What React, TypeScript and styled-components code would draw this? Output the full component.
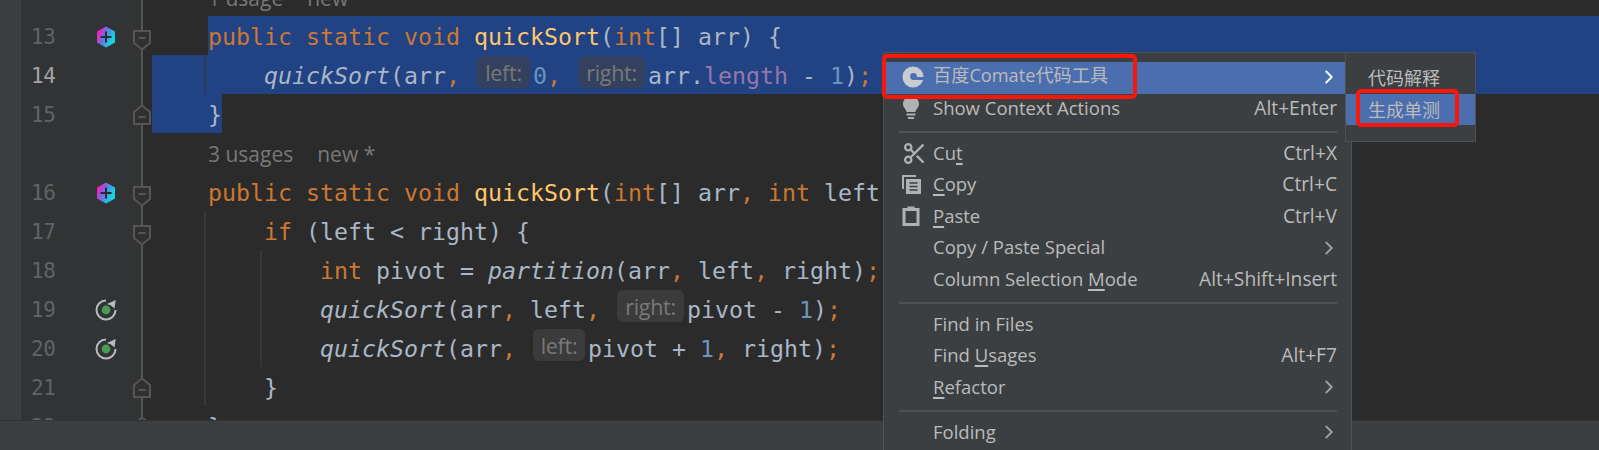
import React, { FC } from 'react';
import styled, { createGlobalStyle } from 'styled-components';
import { ChevronRight, Scissors } from 'lucide-react';

const GlobalStyle = createGlobalStyle`
	html, body {
		margin: 0;
		padding: 0;
		background: #2b2b2b;
	}
`;

const MONO = `'DejaVu Sans Mono', 'Liberation Mono', monospace`;
const SANS = `'Open Sans', 'Noto Sans CJK SC', sans-serif`;
const ROW = 39;

const tokenColors: Record<string, string> = {
	key: '#cc7832',
	decl: '#ffc66d',
	plain: '#a9b7c6',
	num: '#6897bb',
	field: '#9876aa',
	call: '#a9b7c6',
};

const Screen = styled.div`
	position: relative;
	width: 1599px;
	height: 450px;
	overflow: hidden;
	display: flex;
	flex-direction: column;
	background: #2b2b2b;
`;

const Workspace = styled.div`
	flex: 1;
	min-height: 0;
	display: flex;
	overflow: hidden;
`;

const LeftStrip = styled.div`
	width: 21px;
	flex: none;
	background: #3c3f41;
`;

const Gutter = styled.div`
	width: 122px;
	flex: none;
	margin-top: -23px;
	background: #313335;
	box-shadow: inset -2px 0 0 0 #555555;
	height: 470px;
`;

const GutterRow = styled.div`
	position: relative;
	height: ${ROW}px;
	display: grid;
	grid-template-columns: 63px 24px;
	align-items: center;
	padding-left: 10px;
`;

const LineNo = styled.span<{ $current?: boolean }>`
	padding-top: 2px;
	font: 21px/${ROW}px ${MONO};
	letter-spacing: -0.3px;
	color: ${(p) => (p.$current ? '#a4a3a3' : '#606366')};
`;

const MarkerSlot = styled.span`
	display: flex;
	align-items: center;
	justify-content: center;
`;

const FoldMark = styled.svg<{ $up?: boolean }>`
	position: absolute;
	right: -8px;
	top: ${(p) => (p.$up ? 10 : 13)}px;
	z-index: 1;
`;

const Code = styled.div`
	flex: 1;
	min-width: 0;
	margin-top: -23px;
	height: 470px;
`;

const CodeLine = styled.div<{ $selFrom?: number; $selTo?: number }>`
	position: relative;
	height: ${ROW}px;
	padding-left: 65px;
	white-space: pre;
	font: 23.25px/41px ${MONO};
	color: #a9b7c6;
	background: ${(p) =>
		p.$selFrom !== undefined
			? `linear-gradient(to right, transparent ${p.$selFrom}px, #214283 ${p.$selFrom}px, #214283 ${p.$selTo}px, transparent ${p.$selTo}px)`
			: 'none'};
`;

const Guide = styled.i<{ $at: number; $dark?: boolean }>`
	position: absolute;
	top: 0;
	bottom: 0;
	left: ${(p) => p.$at}px;
	width: 2px;
	background: ${(p) => (p.$dark ? '#2b3a55' : '#373737')};
`;

const Token = styled.span<{ $kind: string }>`
	color: ${(p) => tokenColors[p.$kind]};
	font-style: ${(p) => (p.$kind === 'call' ? 'italic' : 'normal')};
`;

const Inlay = styled.span<{ $width: number; $onSelection?: boolean }>`
	display: inline-block;
	width: ${(p) => p.$width}px;
	height: 32px;
	margin: 0 3px;
	border-radius: 6px;
	text-align: center;
	vertical-align: 3px;
	font: 21.5px/33px ${SANS};
	letter-spacing: -0.3px;
	color: #787878;
	background: ${(p) => (p.$onSelection ? '#33415e' : '#3b3b3b')};
`;

const UsageHint = styled.div`
	height: ${ROW}px;
	padding-left: 65px;
	display: flex;
	gap: 24px;
	font: 21px/43px ${SANS};
	color: #787878;
`;

const StatusBar = styled.div`
	height: 29px;
	flex: none;
	background: #3c3f41;
	border-top: 1px solid #323232;
`;

const Menu = styled.div`
	position: absolute;
	left: 883px;
	top: 52px;
	width: 467px;
	height: 420px;
	padding-top: 9px;
	background: #3c3f41;
	border: 1px solid #515151;
	font: 18.5px/29.5px ${SANS};
	color: #bbbbbb;
`;

const SubMenu = styled.div`
	position: absolute;
	left: 1345px;
	top: 52px;
	width: 129px;
	height: 79px;
	padding-top: 9px;
	background: #3c3f41;
	border: 1px solid #515151;
	font: 18px/31.5px 'Noto Sans CJK SC', sans-serif;
	color: #bbbbbb;
`;

const Item = styled.div<{ $active?: boolean }>`
	box-sizing: border-box;
	height: 31.5px;
	display: flex;
	align-items: center;
	padding: 0 14px 2px 18px;
	background: ${(p) => (p.$active ? '#4b6eaf' : 'transparent')};
`;

const SubItem = styled.div<{ $active?: boolean }>`
	height: 31.5px;
	padding-left: 22px;
	background: ${(p) => (p.$active ? '#4b6eaf' : 'transparent')};
`;

const IconSlot = styled.span`
	width: 31px;
	flex: none;
	display: flex;
	align-items: center;
`;

const Label = styled.span<{ $cjk?: boolean }>`
	flex: 1;
	padding-bottom: 2px;
	white-space: pre;
	font-size: ${(p) => (p.$cjk ? '18.2px' : 'inherit')};
`;

const Shortcut = styled.span`
	padding-bottom: 2px;
	white-space: pre;
	font-size: 19.2px;
`;

const Arrow = styled(ChevronRight)<{ $white?: boolean }>`
	color: ${(p) => (p.$white ? '#ffffff' : '#a0a0a0')};
	margin-right: -3px;
`;

const Mnemonic = styled.span`
	text-decoration: underline;
	text-underline-offset: 3px;
	text-decoration-thickness: 2px;
	text-decoration-skip-ink: none;
`;

const Separator = styled.div`
	height: 2px;
	margin: 5.75px 14px 5.75px 15px;
	background: #4f5153;
`;

const RedFrame = styled.div<{ $left: number; $top: number; $width: number; $height: number }>`
	position: absolute;
	left: ${(p) => p.$left}px;
	top: ${(p) => p.$top}px;
	width: ${(p) => p.$width}px;
	height: ${(p) => p.$height}px;
	box-sizing: border-box;
	border: 4px solid #f9170c;
	border-radius: 5px;
`;

const Hexagon: FC<{ id: string }> = ({ id }) => (
	<svg width='20' height='22' viewBox='0 0 20 22'>
		<defs>
			<linearGradient id={id} x1='0' y1='0.2' x2='1' y2='0.7'>
				<stop offset='0.1' stopColor='#f01fc0' />
				<stop offset='0.45' stopColor='#5f7be8' />
				<stop offset='0.85' stopColor='#12d6e0' />
			</linearGradient>
		</defs>
		<path d='M10 0.5 L19 5.5 V16.5 L10 21.5 L1 16.5 V5.5 Z' fill={`url(#${id})`} />
		<path d='M10 5.5 V16.5 M4.5 11 H15.5' stroke='#2b2b2b' strokeWidth='2' />
	</svg>
);

const Rerun: FC = () => (
	<svg width='24' height='24' viewBox='0 0 24 24'>
		<path d='M12 2.5 A9.5 9.5 0 1 0 21.5 12' fill='none' stroke='#b9bbbd' strokeWidth='2' />
		<path d='M13 6 L21.7 2 L20.5 10.5 L17 7.5 Z' fill='#b9bbbd' />
		<circle cx='12' cy='12' r='4.4' fill='#499c54' />
	</svg>
);

const Fold: FC<{ up?: boolean }> = ({ up }) => (
	<FoldMark $up={up} width='18' height='22' viewBox='0 0 18 22'>
		<path
			d={up ? 'M1 20 V8 L9 1.5 L17 8 V20 Z' : 'M1 2 H17 V14 L9 20.5 L1 14 Z'}
			fill='#2f3031'
			stroke='#555555'
			strokeWidth='2'
		/>
		<path d={up ? 'M5.5 13 H12.5' : 'M5.5 9 H12.5'} stroke='#555555' strokeWidth='2' />
	</FoldMark>
);

const ComateIcon: FC = () => (
	<svg width='22' height='22' viewBox='0 0 22 22'>
		<circle cx='11' cy='11' r='10.5' fill='#c9cbd0' />
		<path d='M11 11 H22 V14 H15 C13 14 11 13 11 11 Z' fill='#4b6eaf' />
		<circle cx='11.5' cy='10.5' r='3.4' fill='#4b6eaf' />
	</svg>
);

const BulbIcon: FC = () => (
	<svg width='18' height='24' viewBox='0 0 18 24'>
		<path d='M9 0.5 C4 0.5 1 4 1 8 C1 11.5 4 13 4.6 16 H13.4 C14 13 17 11.5 17 8 C17 4 14 0.5 9 0.5 Z' fill='#afb1b3' />
		<path d='M4.5 18.5 H13.5 M6 22 H12' stroke='#afb1b3' strokeWidth='2' />
	</svg>
);

const CopyIcon: FC = () => (
	<svg width='20' height='20' viewBox='0 0 20 20'>
		<path d='M1 14 V1 H14' fill='none' stroke='#afb1b3' strokeWidth='2' />
		<rect x='4' y='4' width='15' height='15' fill='#afb1b3' />
		<path d='M7.5 8 H15.5 M7.5 11.5 H15.5 M7.5 15 H15.5' stroke='#3c3f41' strokeWidth='1.6' />
	</svg>
);

const PasteIcon: FC = () => (
	<svg width='18' height='20' viewBox='0 0 18 20'>
		<rect x='2' y='3.5' width='14' height='15' fill='none' stroke='#afb1b3' strokeWidth='3' />
		<rect x='5.5' y='0.5' width='7' height='4' fill='#afb1b3' />
	</svg>
);

type Part = [string, string] | { hint: string; width: number };

const pubStatic: Part[] = [
	['key', 'public static void '],
	['decl', 'quickSort'],
	['plain', '('],
	['key', 'int'],
	['plain', '[] arr'],
];

const renderParts = (parts: Part[], onSelection?: boolean) =>
	parts.map((part, i) =>
		Array.isArray(part) ? (
			<Token key={i} $kind={part[0]}>
				{part[1]}
			</Token>
		) : (
			<Inlay key={i} $width={part.width} $onSelection={onSelection}>
				{part.hint}
			</Inlay>
		),
	);

const App: FC = () => {
	return (
		<>
			<GlobalStyle />
			<Screen>
				<Workspace>
					<LeftStrip />
					<Gutter>
						<GutterRow />
						<GutterRow>
							<LineNo>13</LineNo>
							<MarkerSlot>
								<Hexagon id='hex13' />
							</MarkerSlot>
							<Fold />
						</GutterRow>
						<GutterRow>
							<LineNo $current>14</LineNo>
						</GutterRow>
						<GutterRow>
							<LineNo>15</LineNo>
							<Fold up />
						</GutterRow>
						<GutterRow />
						<GutterRow>
							<LineNo>16</LineNo>
							<MarkerSlot>
								<Hexagon id='hex16' />
							</MarkerSlot>
							<Fold />
						</GutterRow>
						<GutterRow>
							<LineNo>17</LineNo>
							<Fold />
						</GutterRow>
						<GutterRow>
							<LineNo>18</LineNo>
						</GutterRow>
						<GutterRow>
							<LineNo>19</LineNo>
							<MarkerSlot>
								<Rerun />
							</MarkerSlot>
						</GutterRow>
						<GutterRow>
							<LineNo>20</LineNo>
							<MarkerSlot>
								<Rerun />
							</MarkerSlot>
						</GutterRow>
						<GutterRow>
							<LineNo>21</LineNo>
							<Fold up />
						</GutterRow>
						<GutterRow>
							<LineNo>22</LineNo>
							<Fold up />
						</GutterRow>
					</Gutter>
					<Code>
						<UsageHint>
							<span>1 usage</span>
							<span>new</span>
						</UsageHint>
						<CodeLine $selFrom={65} $selTo={1456}>
							{renderParts([...pubStatic, ['plain', ') {']])}
						</CodeLine>
						<CodeLine $selFrom={9} $selTo={1456}>
							<Guide $at={61} $dark />
							{'    '}
							{renderParts(
								[
									['call', 'quickSort'],
									['plain', '(arr'],
									['key', ', '],
									{ hint: 'left:', width: 53 },
									['num', '0'],
									['key', ', '],
									{ hint: 'right:', width: 67 },
									['plain', 'arr.'],
									['field', 'length'],
									['plain', ' - '],
									['num', '1'],
									['plain', ')'],
									['key', ';'],
								],
								true,
							)}
						</CodeLine>
						<CodeLine $selFrom={9} $selTo={79}>
							{'}'}
						</CodeLine>
						<UsageHint>
							<span>3 usages</span>
							<span>new *</span>
						</UsageHint>
						<CodeLine>
							{renderParts([
								...pubStatic,
								['key', ', int '],
								['plain', 'left'],
								['key', ', int '],
								['plain', 'right) {'],
							])}
						</CodeLine>
						<CodeLine>
							<Guide $at={61} />
							{'    '}
							{renderParts([
								['key', 'if '],
								['plain', '(left < right) {'],
							])}
						</CodeLine>
						<CodeLine>
							<Guide $at={61} />
							<Guide $at={117} />
							{'        '}
							{renderParts([
								['key', 'int '],
								['plain', 'pivot = '],
								['call', 'partition'],
								['plain', '(arr'],
								['key', ', '],
								['plain', 'left'],
								['key', ', '],
								['plain', 'right)'],
								['key', ';'],
							])}
						</CodeLine>
						<CodeLine>
							<Guide $at={61} />
							<Guide $at={117} />
							{'        '}
							{renderParts([
								['call', 'quickSort'],
								['plain', '(arr'],
								['key', ', '],
								['plain', 'left'],
								['key', ', '],
								{ hint: 'right:', width: 67 },
								['plain', 'pivot - '],
								['num', '1'],
								['plain', ')'],
								['key', ';'],
							])}
						</CodeLine>
						<CodeLine>
							<Guide $at={61} />
							<Guide $at={117} />
							{'        '}
							{renderParts([
								['call', 'quickSort'],
								['plain', '(arr'],
								['key', ', '],
								{ hint: 'left:', width: 52 },
								['plain', 'pivot + '],
								['num', '1'],
								['key', ', '],
								['plain', 'right)'],
								['key', ';'],
							])}
						</CodeLine>
						<CodeLine>
							<Guide $at={61} />
							{'    }'}
						</CodeLine>
						<CodeLine>{'}'}</CodeLine>
					</Code>
				</Workspace>
				<StatusBar />

				<Menu>
					<Item $active>
						<IconSlot>
							<ComateIcon />
						</IconSlot>
						<Label $cjk>百度Comate代码工具</Label>
						<Arrow $white size={22} />
					</Item>
					<Item>
						<IconSlot>
							<BulbIcon />
						</IconSlot>
						<Label>Show Context Actions</Label>
						<Shortcut>Alt+Enter</Shortcut>
					</Item>
					<Separator />
					<Item>
						<IconSlot>
							<Scissors size={25} color='#afb1b3' strokeWidth={2.2} />
						</IconSlot>
						<Label>
							Cu<Mnemonic>t</Mnemonic>
						</Label>
						<Shortcut>Ctrl+X</Shortcut>
					</Item>
					<Item>
						<IconSlot>
							<CopyIcon />
						</IconSlot>
						<Label>
							<Mnemonic>C</Mnemonic>opy
						</Label>
						<Shortcut>Ctrl+C</Shortcut>
					</Item>
					<Item>
						<IconSlot>
							<PasteIcon />
						</IconSlot>
						<Label>
							<Mnemonic>P</Mnemonic>aste
						</Label>
						<Shortcut>Ctrl+V</Shortcut>
					</Item>
					<Item>
						<IconSlot />
						<Label>Copy / Paste Special</Label>
						<Arrow size={22} />
					</Item>
					<Item>
						<IconSlot />
						<Label>
							Column Selection <Mnemonic>M</Mnemonic>ode
						</Label>
						<Shortcut>Alt+Shift+Insert</Shortcut>
					</Item>
					<Separator />
					<Item>
						<IconSlot />
						<Label>Find in Files</Label>
					</Item>
					<Item>
						<IconSlot />
						<Label>
							Find <Mnemonic>U</Mnemonic>sages
						</Label>
						<Shortcut>Alt+F7</Shortcut>
					</Item>
					<Item>
						<IconSlot />
						<Label>
							<Mnemonic>R</Mnemonic>efactor
						</Label>
						<Arrow size={22} />
					</Item>
					<Separator />
					<Item>
						<IconSlot />
						<Label>Folding</Label>
						<Arrow size={22} />
					</Item>
				</Menu>

				<SubMenu>
					<SubItem>代码解释</SubItem>
					<SubItem $active>生成单测</SubItem>
				</SubMenu>

				<RedFrame $left={882} $top={54} $width={255} $height={45} />
				<RedFrame $left={1356} $top={89} $width={103} $height={38} />
			</Screen>
		</>
	);
};

export default App;
